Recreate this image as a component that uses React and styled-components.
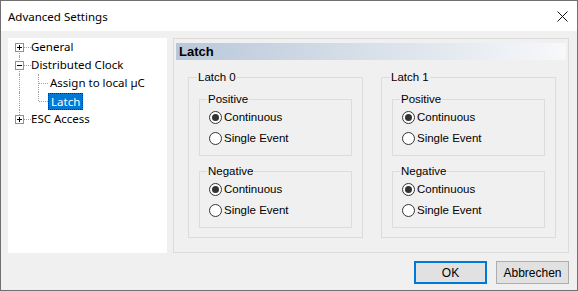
import React from 'react';
import styled, { createGlobalStyle } from 'styled-components';

const GlobalStyle = createGlobalStyle`
    html, body {
        margin: 0;
        padding: 0;
        background: #ffffff;
    }
    * {
        box-sizing: border-box;
    }
`

const treeItems = [
    { label: 'General', level: 0, expander: '+', line: 'down' },
    { label: 'Distributed Clock', level: 0, expander: '-', line: 'both' },
    { label: 'Assign to local µC', level: 1, child: 'both' },
    { label: 'Latch', level: 1, child: 'up', selected: true },
    { label: 'ESC Access', level: 0, expander: '+', line: 'up' },
]

function Radio({ checked, label }) {
    return (
        <RadioRow>
            <RadioCircle checked={checked} />
            <span>{label}</span>
        </RadioRow>
    )
}

function EdgeGroup({ title }) {
    return (
        <InnerGroup>
            <Legend>{title}</Legend>
            <Radio checked label="Continuous" />
            <Radio label="Single Event" />
        </InnerGroup>
    )
}

function LatchGroup({ title }) {
    return (
        <OuterGroup>
            <Legend>{title}</Legend>
            <EdgeGroup title="Positive" />
            <EdgeGroup title="Negative" />
        </OuterGroup>
    )
}

function App() {
    return (
        <>
            <GlobalStyle />
            <Window>
                <TitleBar>
                    <Title>Advanced Settings</Title>
                    <CloseButton>
                        <svg width="11" height="11" viewBox="0 0 11 11">
                            <path d="M0.5 0.5 L10.5 10.5 M10.5 0.5 L0.5 10.5" stroke="#111" strokeWidth="1" fill="none" />
                        </svg>
                    </CloseButton>
                </TitleBar>
                <Body>
                    <Content>
                        <Tree>
                            {treeItems.map((item) => (
                                <TreeRow key={item.label}>
                                    <Gutter line={item.level === 0 ? item.line : 'both'} branch={item.level === 0}>
                                        {item.expander && <Expander>{item.expander === '+' ? <Plus /> : <Minus />}</Expander>}
                                    </Gutter>
                                    {item.level === 1 && <ChildGutter line={item.child} />}
                                    <TreeLabel selected={item.selected}>{item.label}</TreeLabel>
                                </TreeRow>
                            ))}
                        </Tree>
                        <Page>
                            <PageHeader>Latch</PageHeader>
                            <Groups>
                                <LatchGroup title="Latch 0" />
                                <LatchGroup title="Latch 1" />
                            </Groups>
                        </Page>
                    </Content>
                    <Footer>
                        <Button primary>OK</Button>
                        <Button>Abbrechen</Button>
                    </Footer>
                </Body>
            </Window>
        </>
    )
}

export default App;


const Window = styled.div`
    width: 578px;
    height: 291px;
    border: 1px solid #707070;
    display: flex;
    flex-direction: column;
    background: #f0f0f0;
    overflow: hidden;
`

const TitleBar = styled.div`
    height: 30px;
    background: #ffffff;
    display: flex;
    align-items: center;
    justify-content: space-between;
    padding-left: 7px;
`

const Title = styled.div`
    font-family: "Noto Sans", sans-serif;
    font-size: 11.5px;
    color: #000;
`

const CloseButton = styled.div`
    width: 30px;
    height: 30px;
    display: flex;
    align-items: center;
    justify-content: center;
`

const Body = styled.div`
    flex: 1;
    display: flex;
    flex-direction: column;
    padding: 7px 8px 5px 7px;
`

const Content = styled.div`
    display: flex;
    gap: 6px;
    height: 215px;
`

const Tree = styled.div`
    width: 159px;
    background: #ffffff;
    padding: 0 0 0 3px;
    font-family: "Noto Sans", sans-serif;
    font-size: 11.5px;
`

const TreeRow = styled.div`
    display: flex;
    align-items: center;
    height: 18px;
`

const Gutter = styled.div`
    position: relative;
    width: 18px;
    height: 18px;
    flex-shrink: 0;
    display: flex;
    align-items: center;
    justify-content: center;

    &::before {
        content: '';
        position: absolute;
        left: 8px;
        top: ${p => (p.line === 'down' ? '9px' : '0')};
        bottom: ${p => (p.line === 'up' ? '9px' : '0')};
        border-left: 1px dotted #a0a0a0;
    }

    &::after {
        content: '';
        display: ${p => (p.branch ? 'block' : 'none')};
        position: absolute;
        left: 9px;
        right: -2px;
        top: 9px;
        border-top: 1px dotted #a0a0a0;
    }
`

const ChildGutter = styled.div`
    position: relative;
    width: 19px;
    height: 18px;
    flex-shrink: 0;

    &::before {
        content: '';
        position: absolute;
        left: 9px;
        top: 0;
        bottom: ${p => (p.line === 'up' ? '9px' : '0')};
        border-left: 1px dotted #a0a0a0;
    }

    &::after {
        content: '';
        position: absolute;
        left: 10px;
        right: 0;
        top: 9px;
        border-top: 1px dotted #a0a0a0;
    }
`

const Expander = styled.div`
    position: relative;
    z-index: 1;
    width: 9px;
    height: 9px;
    border: 1px solid #919191;
    background: #ffffff;
    display: flex;
    align-items: center;
    justify-content: center;
    margin-left: -1px;
`

const Minus = styled.div`
    width: 5px;
    height: 1px;
    background: #000;
`

const Plus = styled(Minus)`
    position: relative;
    &::after {
        content: '';
        position: absolute;
        left: 2px;
        top: -2px;
        width: 1px;
        height: 5px;
        background: #000;
    }
`

const TreeLabel = styled.div`
    margin-left: ${p => (p.selected ? '0' : '2px')};
    padding: 0 ${p => (p.selected ? '2px' : '0')};
    height: 17px;
    line-height: 15px;
    white-space: nowrap;
    color: ${p => (p.selected ? '#ffffff' : '#000000')};
    background: ${p => (p.selected ? '#0078d7' : 'transparent')};
    border: ${p => (p.selected ? '1px dotted #3a2a10' : 'none')};
`

const Page = styled.div`
    flex: 1;
    border: 1px solid #dcdcdc;
    padding: 4px 2px 0 2px;
    display: flex;
    flex-direction: column;
`

const PageHeader = styled.div`
    height: 17px;
    background: linear-gradient(to right, #b9c8d9, #f7f8fa);
    font-family: "Liberation Sans", Arial, sans-serif;
    font-weight: bold;
    font-size: 13px;
    line-height: 17px;
    padding-left: 3px;
    color: #000;
`

const Groups = styled.div`
    display: flex;
    gap: 18px;
    padding: 11px 0 0 12px;
`

const Legend = styled.legend`
    padding: 0 1px;
    margin-left: -2px;
    font-family: "Liberation Sans", Arial, sans-serif;
    font-size: 11.5px;
    line-height: 13px;
    color: #000;
`

const OuterGroup = styled.fieldset`
    width: 175px;
    height: 167px;
    margin: 0;
    border: 1px solid #dcdcdc;
    padding: 9px 10px 0 10px;
    display: flex;
    flex-direction: column;
    gap: 9px;
`

const InnerGroup = styled.fieldset`
    flex-shrink: 0;
    height: 63px;
    margin: 0;
    border: 1px solid #dcdcdc;
    padding: 4px 0 0 9px;
    display: flex;
    flex-direction: column;
    gap: 7px;
`

const RadioRow = styled.div`
    display: flex;
    align-items: center;
    gap: 2px;
    height: 14px;
    font-family: "Liberation Sans", Arial, sans-serif;
    font-size: 11.5px;
    color: #000;
`

const RadioCircle = styled.div`
    width: 13px;
    height: 13px;
    flex-shrink: 0;
    border-radius: 50%;
    border: 1px solid #333333;
    background: #ffffff;
    display: flex;
    align-items: center;
    justify-content: center;

    &::after {
        content: '';
        display: ${p => (p.checked ? 'block' : 'none')};
        width: 7px;
        height: 7px;
        border-radius: 50%;
        background: #333333;
    }
`

const Footer = styled.div`
    display: flex;
    justify-content: flex-end;
    gap: 9px;
    padding-top: 8px;
`

const Button = styled.div`
    width: 73px;
    height: 23px;
    display: flex;
    align-items: center;
    justify-content: center;
    background: #e1e1e1;
    border: ${p => (p.primary ? '2px solid #0078d7' : '1px solid #adadad')};
    font-family: "Liberation Sans", Arial, sans-serif;
    font-size: 12px;
    color: #000;
`
